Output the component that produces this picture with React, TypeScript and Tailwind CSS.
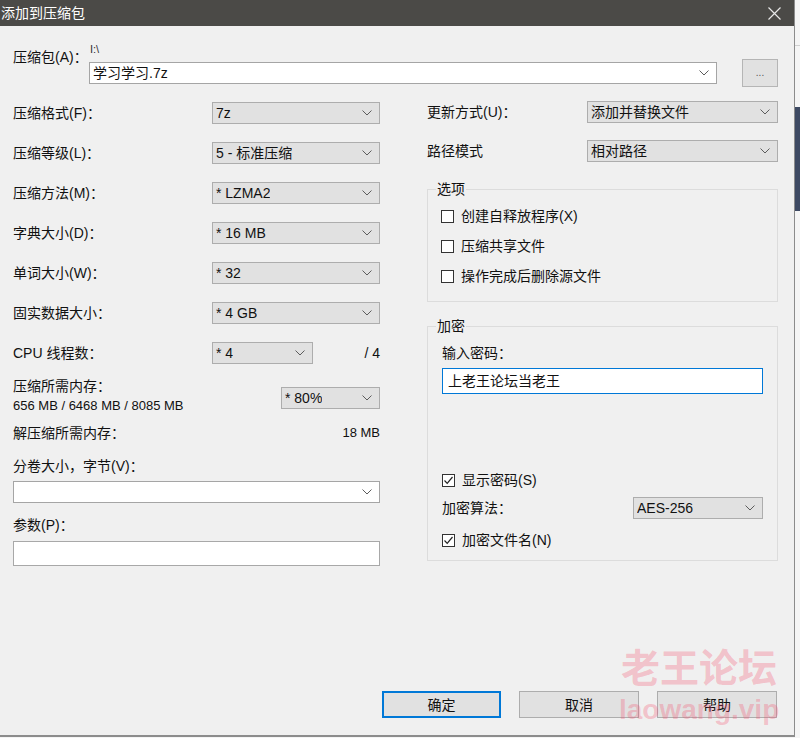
import React from 'react';

function Chevron() {
  return (
    <svg width="10" height="6" viewBox="0 0 10 6" className="shrink-0">
      <path d="M0.5 0.5 L5 5 L9.5 0.5" fill="none" stroke="#5c5c5c" strokeWidth="1" />
    </svg>
  );
}

function Select({ value, className = '', white = false }: { value?: string; className?: string; white?: boolean }) {
  return (
    <div
      className={`flex h-[22px] items-center justify-between border pl-[3px] pr-[7px] text-[14px] leading-[20px] ${
        white ? 'border-[#a5a5a5] bg-white' : 'border-[#adadad] bg-[#e1e1e1]'
      } ${className}`}
    >
      <span className="truncate">{value}</span>
      <Chevron />
    </div>
  );
}

function Check({ label, checked = false }: { label: string; checked?: boolean }) {
  return (
    <div className="flex h-[20px] items-center gap-[7px]">
      <div className="flex h-[13px] w-[13px] items-center justify-center border border-[#333] bg-white">
        {checked && (
          <svg width="11" height="11" viewBox="0 0 11 11">
            <path d="M1.5 5.5 L4.2 8.3 L9.5 2" fill="none" stroke="#222" strokeWidth="1.2" />
          </svg>
        )}
      </div>
      <span className="leading-[20px]">{label}</span>
    </div>
  );
}

function Row({ label, value }: { label: string; value: string }) {
  return (
    <div className="flex h-[22px] items-center">
      <span className="w-[199px] leading-[20px]">{label}</span>
      <Select value={value} className="w-[168px]" />
    </div>
  );
}

export default function App() {
  const leftRows = [
    { label: '压缩格式(F)：', value: '7z' },
    { label: '压缩等级(L)：', value: '5 - 标准压缩' },
    { label: '压缩方法(M)：', value: '* LZMA2' },
    { label: '字典大小(D)：', value: '* 16 MB' },
    { label: '单词大小(W)：', value: '* 32' },
    { label: '固实数据大小：', value: '* 4 GB' },
  ];

  return (
    <div className="relative flex h-[738px] w-[800px] overflow-hidden bg-[#f4f4f4] font-['Liberation_Sans','Noto_Sans_CJK_SC',sans-serif] text-[14px] text-[#111]">
      <div className="flex h-[737px] w-[795px] flex-col border-b-2 border-r border-[#8c8c8c] bg-[#f0f0f0]">
        {/* title bar */}
        <div className="flex h-[26px] items-center justify-between bg-[#4b4a47] pl-[1px] pr-[13px] text-white">
          <span className="text-[14px] leading-[20px]">添加到压缩包</span>
          <svg width="13" height="13" viewBox="0 0 13 13">
            <path d="M0.5 0.5 L12.5 12.5 M12.5 0.5 L0.5 12.5" stroke="#e8e8e8" strokeWidth="1.2" />
          </svg>
        </div>

        <div className="flex flex-1 flex-col pl-[13px] pr-[16px]">
          {/* archive */}
          <div className="mt-[16px] flex">
            <span className="w-[76px] pt-[6px] leading-[18px]">压缩包(A)：</span>
            <div className="flex flex-1 flex-col">
              <span className="h-[17px] pl-[1px] text-[11px] leading-[14px] text-[#333]">I:\</span>
              <div className="flex h-[28px] items-center gap-[25px]">
                <Select value="学习学习.7z" white className="flex-1 border-[#8f8f8f]" />
                <div className="flex h-[28px] w-[36px] items-center justify-center border border-[#b5b5b5] bg-[#e1e1e1] text-[10px] leading-none text-[#555]">
                  ...
                </div>
              </div>
            </div>
          </div>

          {/* columns */}
          <div className="mt-[15px] flex justify-between">
            {/* left */}
            <div className="flex w-[367px] flex-col">
              <div className="flex flex-col gap-[18px]">
                {leftRows.map((r) => (
                  <Row key={r.label} label={r.label} value={r.value} />
                ))}
                <div className="flex h-[22px] items-center">
                  <span className="w-[199px] leading-[20px]">CPU 线程数：</span>
                  <Select value="* 4" className="w-[101px]" />
                  <span className="flex-1 text-right leading-[20px]">/ 4</span>
                </div>
              </div>

              <div className="mt-[12px] flex items-start justify-between">
                <div className="flex flex-col leading-[20px]">
                  <span>压缩所需内存：</span>
                  <span className="text-[13px]">656 MB / 6468 MB / 8085 MB</span>
                </div>
                <Select value="* 80%" className="mt-[11px] w-[99px]" />
              </div>

              <div className="mt-[7px] flex justify-between leading-[20px]">
                <span>解压缩所需内存：</span>
                <span className="text-[13px]">18 MB</span>
              </div>

              <span className="mt-[13px] leading-[20px]">分卷大小，字节(V)：</span>
              <Select white className="mt-[5px] w-full" />

              <span className="mt-[12px] leading-[20px]">参数(P)：</span>
              <div className="mt-[6px] h-[25px] w-full border border-[#a8a8a8] bg-white" />
            </div>

            {/* right */}
            <div className="flex w-[351px] flex-col">
              <div className="-mt-px flex h-[22px] items-center">
                <span className="w-[160px] leading-[20px]">更新方式(U)：</span>
                <Select value="添加并替换文件" className="w-[191px]" />
              </div>
              <div className="mt-[17px] flex h-[22px] items-center">
                <span className="w-[160px] leading-[20px]">路径模式</span>
                <Select value="相对路径" className="w-[191px]" />
              </div>

              <fieldset className="mt-[18px] border border-[#dcdcdc] pb-[15px] pl-[13px]">
                <legend className="ml-[-5px] px-[1px] leading-[18px]">选项</legend>
                <div className="flex flex-col gap-[10px] pt-[8px]">
                  <Check label="创建自释放程序(X)" />
                  <Check label="压缩共享文件" />
                  <Check label="操作完成后删除源文件" />
                </div>
              </fieldset>

              <fieldset className="mt-[15px] border border-[#dcdcdc] px-[14px] pb-[10px]">
                <legend className="ml-[-6px] px-[1px] leading-[18px]">加密</legend>
                <div className="flex flex-col">
                  <span className="pt-[8px] leading-[20px]">输入密码：</span>
                  <div className="mt-[5px] flex h-[26px] items-center border border-[#0078d7] bg-white px-[5px] leading-[20px]">
                    上老王论坛当老王
                  </div>
                  <div className="mt-[76px]">
                    <Check label="显示密码(S)" checked />
                  </div>
                  <div className="mt-[7px] flex h-[22px] items-center justify-between">
                    <span className="leading-[20px]">加密算法：</span>
                    <Select value="AES-256" className="w-[130px]" />
                  </div>
                  <div className="mt-[11px]">
                    <Check label="加密文件名(N)" checked />
                  </div>
                </div>
              </fieldset>
            </div>
          </div>

          {/* buttons */}
          <div className="mt-auto mr-[1px] flex justify-end gap-[18px] pb-[17px]">
            <div className="flex h-[27px] w-[119px] items-center justify-center border-2 border-[#0078d7] bg-[#e1e1e1] leading-[20px]">
              确定
            </div>
            <div className="flex h-[27px] w-[120px] items-center justify-center border border-[#adadad] bg-[#e1e1e1] leading-[20px]">
              取消
            </div>
            <div className="flex h-[27px] w-[120px] items-center justify-center border border-[#adadad] bg-[#e1e1e1] leading-[20px]">
              帮助
            </div>
          </div>
        </div>
      </div>

      {/* desktop strip */}
      <div className="flex w-[5px] flex-col bg-[#f5f5f5]">
        <div className="mt-[45px] h-px bg-[#d0d0d0]" />
        <div className="mt-[61px] h-[104px] bg-[#3e4a63]" />
      </div>

      {/* watermark */}
      <div className="pointer-events-none absolute left-[619px] top-[644px] flex flex-col items-center text-[rgba(245,80,110,0.3)]">
        <span className="text-[39px] font-bold leading-[50px]">老王论坛</span>
        <span className="-mt-[2px] font-['Liberation_Sans',sans-serif] text-[28px] font-bold leading-[36px]">laowang.vip</span>
      </div>
    </div>
  );
}
